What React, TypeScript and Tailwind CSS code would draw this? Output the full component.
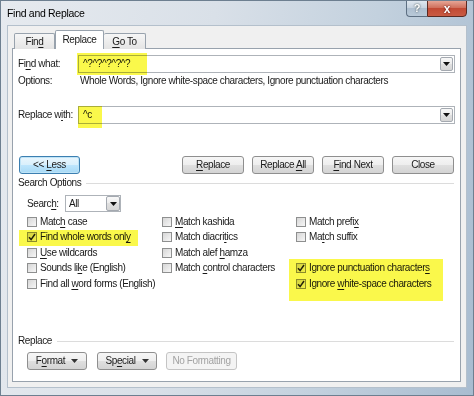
import React from 'react';

const U = ({ children }: { children: React.ReactNode }) => (
  <span className="underline underline-offset-[1.5px] decoration-[1px]">{children}</span>
);

function Arrow({ color = '#111' }: { color?: string }) {
  return (
    <svg width="7" height="4" viewBox="0 0 7 4">
      <path d="M0 0h7L3.5 4z" fill={color} />
    </svg>
  );
}

function DropBtn({ className = '' }: { className?: string }) {
  return (
    <div
      className={`flex items-center justify-center border border-[#a4a9b0] rounded-[2px] bg-[linear-gradient(#f8f8f8,#ececec_50%,#e0e0e0_50%,#d6d6d6)] ${className}`}
    >
      <Arrow />
    </div>
  );
}

function Combo({ value }: { value: string }) {
  return (
    <div className="flex-1 h-[18px] border border-[#aeb3b9] bg-white flex items-center pl-[4px] pr-[1px]">
      <span className="flex-1 leading-none">{value}</span>
      <DropBtn className="w-[13px] h-[14px]" />
    </div>
  );
}

interface BtnProps {
  children: React.ReactNode;
  className?: string;
  focus?: boolean;
  disabled?: boolean;
}

function Btn({ children, className = '', focus = false, disabled = false }: BtnProps) {
  let skin =
    'border-[#8f8f8f] bg-[linear-gradient(#f6f6f6,#eeeeee_50%,#e0e0e0_50%,#d4d4d4)] text-[#1a1a1a]';
  if (focus)
    skin =
      'border-[#3c7fb1] bg-[linear-gradient(#eaf6fd,#d9f0fc_50%,#bee6fd_50%,#a7d9f5)] text-[#1a1a1a] shadow-[inset_0_0_0_1px_#bfe4f7]';
  if (disabled) skin = 'border-[#c4c4c4] bg-[#f4f4f4] text-[#a3a3a3]';
  return (
    <div
      className={`h-[18px] flex items-center justify-center gap-[6px] border rounded-[3px] leading-none ${skin} ${className}`}
    >
      {children}
    </div>
  );
}

function Check({ checked = false }: { checked?: boolean }) {
  return (
    <div className="w-[10px] h-[10px] shrink-0 border border-[#8e8f8f] bg-[linear-gradient(135deg,#d6d6d6,#f7f7f7)] flex items-center justify-center">
      {checked && (
        <svg width="8" height="8" viewBox="0 0 8 8">
          <path d="M1 4.2 L3.1 6.6 L7 1" fill="none" stroke="#222" strokeWidth="1.5" />
        </svg>
      )}
    </div>
  );
}

function Row({ label, checked = false }: { label?: React.ReactNode; checked?: boolean }) {
  return (
    <div className="h-[15.5px] flex items-center gap-[3px] whitespace-nowrap">
      {label && (
        <>
          <Check checked={checked} />
          <span className="leading-none">{label}</span>
        </>
      )}
    </div>
  );
}

function GroupTitle({ children }: { children: React.ReactNode }) {
  return (
    <div className="h-[12px] flex items-center gap-[5px] pr-[1px]">
      <span className="leading-none">{children}</span>
      <div className="flex-1 h-px bg-[#dcdcdc]" />
    </div>
  );
}

export default function App() {
  return (
    <div className="relative w-[474px] h-[396px] overflow-hidden flex flex-col border border-[#6d7f90] bg-[linear-gradient(100deg,#e6eaef_0%,#d9e0e8_40%,#c3d1de_70%,#a8bcd0_100%)] font-['Liberation_Sans',Arial,sans-serif] text-[10px] tracking-[-0.4px] text-[#1a1a1a]">
      {/* title bar */}
      <div className="h-[24px] flex items-start justify-between">
        <div className="pl-[6px] pt-[7px] text-[10.5px] leading-none text-black tracking-[-0.3px]">
          Find and Replace
        </div>
        <div className="flex mr-[6px] -mt-px">
          <div className="w-[21px] h-[17px] flex items-center justify-center rounded-bl-[4px] border border-[#5d6f82] border-r-0 bg-[linear-gradient(#dfe7ef,#c4d1de_50%,#aebfd0_50%,#b9c9d8)] text-white font-bold text-[11px] [text-shadow:0_0_2px_#233]">
            ?
          </div>
          <div className="w-[40px] h-[17px] flex items-center justify-center rounded-br-[4px] border border-[#5b2a22] bg-[linear-gradient(#e6a595,#d0705c_45%,#c24a34_50%,#c95b43)] text-white font-bold text-[12px] [text-shadow:0_0_2px_#400]">
            x
          </div>
        </div>
      </div>

      {/* client area */}
      <div className="flex-1 mx-[6px] mb-[7px] bg-[#f0f0f0] border border-[#b4c0cc] pl-[4px] pr-[5px] pt-[5px] pb-[5px] flex flex-col">
        {/* tabs */}
        <div className="h-[18px] flex items-end pl-[2px] relative z-10 -mb-px">
          <div className="w-[41px] h-[16px] border border-[#98a2ad] border-b-0 rounded-t-[2px] bg-[linear-gradient(#f6f6f6,#e4e4e4)] flex items-center justify-center leading-none">
            <span>
              Fin<U>d</U>
            </span>
          </div>
          <div className="w-[49px] h-[19px] border border-[#98a2ad] border-b-0 rounded-t-[2px] bg-white flex items-center justify-center leading-none">
            Replace
          </div>
          <div className="w-[42px] h-[16px] border border-[#98a2ad] border-b-0 border-l-0 rounded-t-[2px] bg-[linear-gradient(#f6f6f6,#e4e4e4)] flex items-center justify-center leading-none">
            <span>
              <U>G</U>o To
            </span>
          </div>
        </div>

        {/* panel */}
        <div className="flex-1 bg-white border border-[#98a2ad] pl-[5px] pr-[5px] pt-[6px] pb-[11px] flex flex-col">
          <div className="flex items-center">
            <div className="w-[60px] leading-none">
              Fi<U>n</U>d what:
            </div>
            <Combo value="^?^?^?^?^?" />
          </div>
          <div className="flex items-center mt-[2px] h-[12px]">
            <div className="w-[62px] leading-none">Options:</div>
            <div className="leading-none">
              Whole Words, Ignore white-space characters, Ignore punctuation characters
            </div>
          </div>
          <div className="flex items-center mt-[19px]">
            <div className="w-[60px] leading-none whitespace-nowrap">
              Replace w<U>i</U>th:
            </div>
            <Combo value="^c" />
          </div>

          {/* buttons */}
          <div className="flex items-center mt-[32px] pr-[1px]">
            <Btn focus className="w-[61px] ml-[1px]">
              <span>
                &lt;&lt; <U>L</U>ess
              </span>
            </Btn>
            <div className="flex-1" />
            <div className="flex gap-[8px]">
              <Btn className="w-[62px]">
                <span>
                  <U>R</U>eplace
                </span>
              </Btn>
              <Btn className="w-[62px]">
                <span>
                  Replace <U>A</U>ll
                </span>
              </Btn>
              <Btn className="w-[62px]">
                <span>
                  <U>F</U>ind Next
                </span>
              </Btn>
              <Btn className="w-[62px]">Close</Btn>
            </div>
          </div>

          <div className="mt-[3px]">
            <GroupTitle>Search Options</GroupTitle>
          </div>

          <div className="flex items-center mt-[6px] ml-[9px]">
            <div className="w-[38px] leading-none">
              Searc<U>h</U>:
            </div>
            <div className="w-[56px] h-[17px] border border-[#aeb3b9] bg-white flex items-center">
              <span className="flex-1 pl-[3px] leading-none">All</span>
              <DropBtn className="w-[14px] h-[15px]" />
            </div>
          </div>

          <div className="grid grid-cols-[135px_134px_1fr] ml-[9px] mt-[2px]">
            <div className="flex flex-col">
              <Row label={<>Matc<U>h</U> case</>} />
              <Row label={<>Find whole words onl<U>y</U></>} checked />
              <Row label={<><U>U</U>se wildcards</>} />
              <Row label={<>Sounds li<U>k</U>e (English)</>} />
              <Row label={<>Find all <U>w</U>ord forms (English)</>} />
            </div>
            <div className="flex flex-col">
              <Row label={<><U>M</U>atch kashida</>} />
              <Row label={<>Match diacri<U>t</U>ics</>} />
              <Row label={<>Match alef <U>h</U>amza</>} />
              <Row label={<>Match <U>c</U>ontrol characters</>} />
            </div>
            <div className="flex flex-col">
              <Row label={<>Match prefi<U>x</U></>} />
              <Row label={<>Ma<U>t</U>ch suffix</>} />
              <Row />
              <Row label={<>Ignore punctuation character<U>s</U></>} checked />
              <Row label={<>Ignore <U>w</U>hite-space characters</>} checked />
            </div>
          </div>

          <div className="flex-1" />

          <GroupTitle>Replace</GroupTitle>
          <div className="flex items-center mt-[5px] ml-[9px]">
            <Btn className="w-[60px] h-[17px]">
              <span>
                F<U>o</U>rmat
              </span>
              <Arrow color="#333" />
            </Btn>
            <Btn className="w-[60px] h-[17px] ml-[10px]">
              <span>
                Sp<U>e</U>cial
              </span>
              <Arrow color="#333" />
            </Btn>
            <Btn disabled className="w-[71px] h-[17px] ml-[9px]">
              No Formatting
            </Btn>
          </div>
        </div>
      </div>

      {/* highlighter marks */}
      <div className="absolute left-[76px] top-[52px] w-[70px] h-[22px] bg-[#faf84b] mix-blend-multiply" />
      <div className="absolute left-[77px] top-[105px] w-[24px] h-[22px] bg-[#faf84b] mix-blend-multiply" />
      <div className="absolute left-[18px] top-[229px] w-[119px] h-[16px] bg-[#faf84b] mix-blend-multiply" />
      <div className="absolute left-[288px] top-[258px] w-[154px] h-[42px] bg-[#faf84b] mix-blend-multiply" />
    </div>
  );
}
